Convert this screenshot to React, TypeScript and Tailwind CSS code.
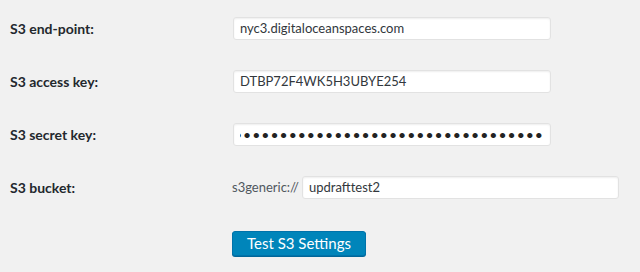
const font = { fontFamily: "Lato, 'Open Sans', sans-serif" };

function Field({ value, className = "" }: { value: string; className?: string }) {
  return (
    <div
      className={`h-[23px] flex items-center px-[6px] bg-white border border-[#e2e2e2] rounded-[3px] shadow-[inset_0_1px_2px_rgba(0,0,0,0.07)] text-[13px] text-[#32373c] ${className}`}
    >
      {value}
    </div>
  );
}

function Row({ label, children }: { label: string; children: React.ReactNode }) {
  return (
    <div className="flex items-center h-[23px]">
      <div className="w-[233px] shrink-0 pl-[10px] text-[14px] font-bold text-[#23282d]">{label}</div>
      {children}
    </div>
  );
}

export default function App() {
  return (
    <div className="w-[640px] h-[272px] bg-[#f1f1f1] pt-[17px] flex flex-col" style={font}>
      <div className="flex flex-col gap-[30px]">
        <Row label="S3 end-point:">
          <Field value="nyc3.digitaloceanspaces.com" className="w-[318px]" />
        </Row>
        <Row label="S3 access key:">
          <Field value="DTBP72F4WK5H3UBYE254" className="w-[318px]" />
        </Row>
        <Row label="S3 secret key:">
          <div className="w-[318px] h-[23px] flex items-center px-[6px] bg-white border border-[#e2e2e2] rounded-[3px] shadow-[inset_0_1px_2px_rgba(0,0,0,0.07)]">
            <div className="flex-1 overflow-hidden flex justify-end whitespace-nowrap text-[14px] tracking-[1px] text-[#222]">
              {"•".repeat(40)}
            </div>
          </div>
        </Row>
        <Row label="S3 bucket:">
          <div className="flex items-center">
            <span className="text-[13px] text-[#50575e] mr-[3px] ml-[-1px]">s3generic://</span>
            <Field value="updrafttest2" className="w-[317px]" />
          </div>
        </Row>
      </div>
      <div className="pl-[232px] mt-[32px]">
        <button className="h-[25px] w-[134px] rounded-[3px] bg-[#0085ba] border border-[#0073aa] shadow-[0_1px_0_#006799] text-white text-[15px] leading-none">
          Test S3 Settings
        </button>
      </div>
    </div>
  );
}
